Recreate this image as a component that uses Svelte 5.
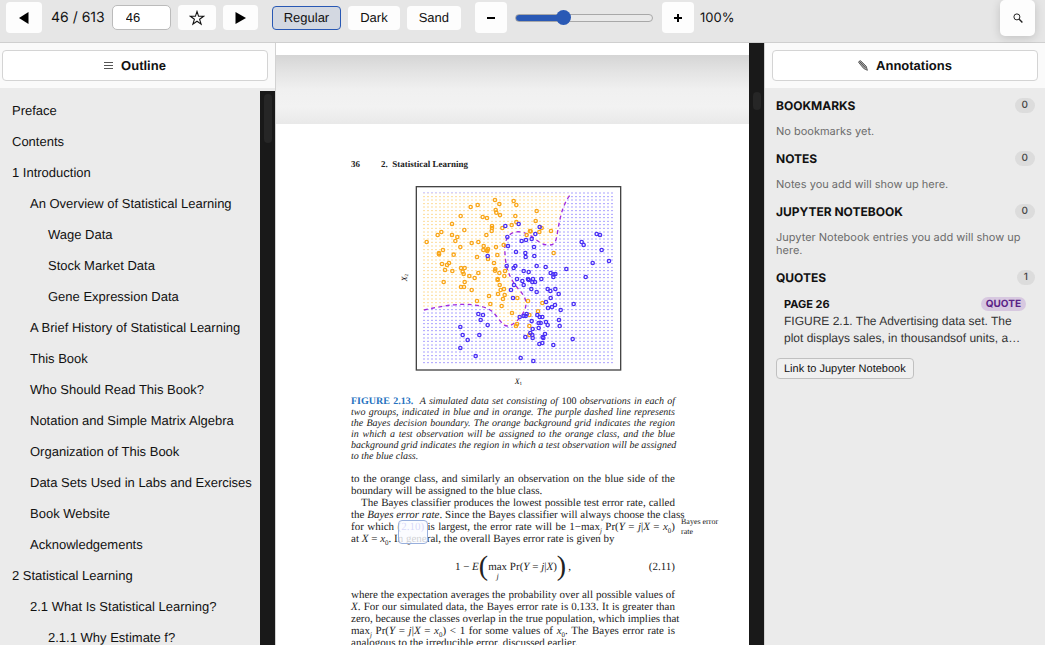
<script>
  let page = $state(46);
  let zoom = $state(100);
  let theme = $state('Regular');
  const total = 613;
  const themes = ['Regular', 'Dark', 'Sand'];
  const fill = $derived(((zoom - 50) / 150) * 100);

  const outline = [
    [0, 'Preface'],
    [0, 'Contents'],
    [0, '1 Introduction'],
    [1, 'An Overview of Statistical Learning'],
    [2, 'Wage Data'],
    [2, 'Stock Market Data'],
    [2, 'Gene Expression Data'],
    [1, 'A Brief History of Statistical Learning'],
    [1, 'This Book'],
    [1, 'Who Should Read This Book?'],
    [1, 'Notation and Simple Matrix Algebra'],
    [1, 'Organization of This Book'],
    [1, 'Data Sets Used in Labs and Exercises'],
    [1, 'Book Website'],
    [1, 'Acknowledgements'],
    [0, '2 Statistical Learning'],
    [1, '2.1 What Is Statistical Learning?'],
    [2, '2.1.1 Why Estimate f?']
  ];

  const sections = [
    ['Bookmarks', 'No bookmarks yet.'],
    ['Notes', 'Notes you add will show up here.'],
    ['Jupyter Notebook', 'Jupyter Notebook entries you add will show up here.']
  ];

  // Scatter points, in plot units (three per pixel)
  const orange = [
    [285, 60], [298, 72], [341, 63], [349, 75], [233, 75], [212, 81], [287, 90], [289, 98], [300, 105], [182, 108],
    [248, 111], [261, 114], [346, 108], [410, 93], [407, 123], [156, 132], [193, 150], [276, 138], [276, 144], [275, 153],
    [307, 144], [335, 135], [349, 126], [390, 153], [392, 154], [380, 165], [418, 156], [425, 144], [453, 153], [124, 156],
    [113, 165], [156, 165], [172, 171], [166, 183], [259, 165], [80, 186], [215, 189], [235, 186], [251, 198], [288, 201],
    [311, 195], [181, 201], [129, 210], [117, 219], [117, 223], [161, 224], [250, 210], [261, 211], [264, 207], [262, 213],
    [292, 225], [231, 231], [264, 237], [282, 249], [461, 219], [126, 252], [141, 255], [147, 249], [135, 270], [157, 273],
    [183, 264], [194, 264], [188, 275], [191, 282], [208, 288], [224, 294], [235, 279], [286, 267], [285, 272], [298, 279],
    [315, 273], [313, 288], [293, 297], [293, 300], [131, 306], [194, 306], [183, 321], [192, 321], [215, 330], [299, 315],
    [302, 330], [312, 327], [294, 342], [314, 345], [309, 357], [267, 348], [231, 363], [271, 372], [305, 378], [336, 399],
    [352, 354], [384, 363], [427, 369], [414, 394], [388, 405], [351, 432], [348, 438], [388, 438], [388, 465]
  ];
  const blue = [
    [316, 138], [356, 132], [419, 141], [406, 162], [322, 171], [324, 198], [365, 183], [378, 180], [395, 177], [402, 201],
    [348, 216], [376, 219], [377, 231], [403, 228], [263, 228], [320, 258], [341, 264], [346, 258], [371, 273], [386, 276],
    [410, 258], [437, 261], [499, 267], [452, 279], [460, 283], [466, 282], [460, 291], [351, 297], [367, 303], [384, 297],
    [386, 300], [399, 297], [397, 306], [405, 306], [424, 297], [371, 315], [342, 315], [333, 330], [394, 327], [410, 336],
    [443, 327], [451, 333], [466, 327], [476, 342], [339, 354], [452, 354], [438, 366], [444, 384], [456, 381], [465, 375],
    [482, 390], [521, 372], [590, 162], [600, 165], [545, 186], [551, 195], [605, 210], [627, 243], [578, 249], [557, 291],
    [235, 402], [249, 405], [242, 420], [263, 435], [181, 441], [188, 465], [238, 465], [203, 480], [181, 504], [227, 528],
    [359, 411], [371, 408], [377, 408], [380, 402], [412, 405], [419, 411], [427, 411], [395, 423], [416, 429], [422, 429],
    [438, 426], [443, 435], [477, 420], [479, 438], [416, 444], [398, 447], [391, 459], [397, 465], [398, 474], [376, 471],
    [435, 462], [428, 471], [430, 474], [418, 492], [427, 489], [460, 495], [518, 477], [362, 534], [400, 543]
  ];
  const rows = Array.from({ length: 49 }, (_, i) => Math.round(39 + i * 10.6));
  const boundary =
    'M72 390C110 382 150 373 190 373S258 380 276 394 305 438 322 438 365 412 374 390 376 350 358 330 320 280 316 235 315 185 326 168 368 152 390 166 420 193 442 195 468 186 472 160 482 105 488 88 502 54 514 40';

  const caption = [
    'two groups, indicated in blue and in orange. The purple dashed line represents',
    'the Bayes decision boundary. The orange background grid indicates the region',
    'in which a test observation will be assigned to the orange class, and the blue',
    'background grid indicates the region in which a test observation will be assigned'
  ];
</script>

<div class="app">
  <header class="toolbar">
    <button class="square prev" aria-label="Previous page" onclick={() => (page = Math.max(1, page - 1))}>
      <svg width="10" height="12" viewBox="0 0 10 12"><path d="M9.500 0v12L0 6z" /></svg>
    </button>
    <span class="count">{page} / {total}</span>
    <input class="number" type="text" aria-label="Page number" bind:value={page} />
    <button class="star" aria-label="Bookmark page">
      <svg width="16" height="16" viewBox="0 0 16 16">
        <path d="M8 1.500l1.600 4.800h5L10.600 9.300l1.500 4.900L8 11.200l-4.100 3 1.500-4.900-4-3h5z" fill="none" stroke="#111" stroke-width="1.100" />
      </svg>
    </button>
    <button class="next" aria-label="Next page" onclick={() => (page = Math.min(total, page + 1))}>
      <svg width="11" height="12" viewBox="0 0 11 12"><path d="M.5 0v12L11 6z" /></svg>
    </button>
    <div class="themes">
      {#each themes as name}
        <button class:active={theme === name} onclick={() => (theme = name)}>{name}</button>
      {/each}
    </div>
    <div class="zoom">
      <button class="square" aria-label="Zoom out">
        <svg width="10" height="10" viewBox="0 0 10 10"><path d="M1 4h8v2H1z" /></svg>
      </button>
      <input type="range" min="50" max="200" aria-label="Zoom" bind:value={zoom} style="--fill: {fill}%" />
      <button class="square" aria-label="Zoom in">
        <svg width="10" height="10" viewBox="0 0 10 10"><path d="M1 4h3V1h2v3h3v2H6v3H4V6H1z" /></svg>
      </button>
      <span class="percent">{zoom}%</span>
    </div>
    <button class="search" aria-label="Search">
      <svg width="10" height="10" viewBox="0 0 10 10">
        <circle cx="3.900" cy="3.900" r="3" fill="none" stroke="#222" />
        <path d="M6.200 6.200l3.200 3.200" stroke="#222" stroke-width="1.400" />
      </svg>
    </button>
  </header>

  <div class="workspace">
    <nav class="side" aria-label="Outline">
      <div class="head">
        <button>
          <svg width="9" height="8" viewBox="0 0 9 8"><path d="M0 .5h9M0 3.500h9M0 6.500h9" stroke="#555" /></svg>
          Outline
        </button>
      </div>
      <div class="scroller">
        <ul>
          {#each outline as [level, title]}
            <li class="level{level}"><a href="#outline">{title}</a></li>
          {/each}
        </ul>
        <div class="bar"><div class="thumb tall"></div></div>
      </div>
    </nav>

    <main>
      <div class="viewer">
        <div class="previous"></div>
        <div class="between"></div>
        <article>
          <div class="running"><b>36</b><b>2.&nbsp; Statistical Learning</b></div>

          <figure>
            <svg viewBox="0 0 972 624" role="img" aria-label="Simulated data with two classes">
              <defs>
                <clipPath id="upper"><path d="{boundary}H60V390z" /></clipPath>
              </defs>
              <g transform="translate(147 0)">
                <rect x="49" y="20" width="613" height="550" fill="#fff" stroke="#444" stroke-width="4" />
                <g stroke-width="3" stroke-dasharray="6 6">
                  {#each rows as y}<path d="M69 {y}H642" stroke="#aaa2ff" />{/each}
                </g>
                <g clip-path="url(#upper)">
                  <path d="M60 30H530V450H60z" fill="#fff" />
                  <g stroke-width="3" stroke-dasharray="6 6">
                    {#each rows as y}<path d="M69 {y}H642" stroke="#fddc98" />{/each}
                  </g>
                </g>
                <path d={boundary} fill="none" stroke="#a02be0" stroke-width="4" stroke-dasharray="12 10" />
                <g fill="none" stroke="#f9a61a" stroke-width="4">
                  {#each orange as [x, y]}<circle cx={x} cy={y} r="5" />{/each}
                </g>
                <g fill="none" stroke="#4a30f5" stroke-width="4">
                  {#each blue as [x, y]}<circle cx={x} cy={y} r="5" />{/each}
                </g>
                <text x="344" y="612" font-size="24" font-style="italic">X<tspan font-size="15" dy="4" font-style="normal">1</tspan></text>
                <text transform="translate(20 304) rotate(-90)" font-size="24" font-style="italic">X<tspan font-size="15" dy="4" font-style="normal">2</tspan></text>
              </g>
            </svg>
            <figcaption>
              <div class="line"><b>FIGURE 2.13.</b> &nbsp;A simulated data set consisting of <span class="up">100</span> observations in each of</div>
              {#each caption as text}<div class="line">{text}</div>{/each}
              <div>to the blue class.</div>
            </figcaption>
          </figure>

          <div class="para">
            <div class="line">to the orange class, and similarly an observation on the blue side of the</div>
            <div>boundary will be assigned to the blue class.</div>
          </div>
          <div class="para">
            <div class="line indent">The Bayes classifier produces the lowest possible test error rate, called</div>
            <div class="line">the <i>Bayes error rate</i>. Since the Bayes classifier will always choose the class</div>
            <div class="line">for which (<a class="ref" href="#eq">2.10)</a> is largest, the error rate will be 1−max<sub><i>j</i></sub> Pr(<i>Y</i> = <i>j</i>|<i>X</i> = <i>x</i><sub>0</sub>)</div>
            <div>at <i>X</i> = <i>x</i><sub>0</sub>. In general, the overall Bayes error rate is given by</div>
          </div>
          <aside>Bayes error<br />rate</aside>

          <div class="equation">
            <div class="formula">
              <span>1 − <i>E</i></span><span class="paren">(</span><span class="max">max<i>j</i></span><span>&nbsp;Pr(<i>Y</i> = <i>j</i>|<i>X</i>)</span><span class="paren">)</span><span>&thinsp;,</span>
            </div>
            <span class="tag">(2.11)</span>
          </div>

          <div class="para">
            <div class="line">where the expectation averages the probability over all possible values of</div>
            <div class="line"><i>X</i>. For our simulated data, the Bayes error rate is 0.133. It is greater than</div>
            <div class="line">zero, because the classes overlap in the true population, which implies that</div>
            <div class="line">max<sub><i>j</i></sub> Pr(<i>Y</i> = <i>j</i>|<i>X</i> = <i>x</i><sub>0</sub>) &lt; 1 for some values of <i>x</i><sub>0</sub>. The Bayes error rate is</div>
            <div>analogous to the irreducible error, discussed earlier.</div>
          </div>
        </article>
      </div>
      <div class="bar main"><div class="thumb"></div></div>
    </main>

    <aside class="side notes" aria-label="Annotations">
      <div class="head">
        <button>
          <svg width="10" height="11" viewBox="0 0 10 11">
            <path d="M.6 2.400Q.8.800 2.600.700L8.200 6.200 9.400 10.300 5.700 8.500z" fill="#aaa" stroke="#555" stroke-width=".9" />
            <path d="M1.500 1.500l6 6.300" stroke="#444" stroke-width=".9" />
          </svg>
          Annotations
        </button>
      </div>
      <div class="sections">
        {#each sections as [title, empty]}
          <section>
            <h2>{title}<span class="badge">0</span></h2>
            <p>{empty}</p>
          </section>
        {/each}
        <section>
          <h2>Quotes<span class="badge">1</span></h2>
          <div class="quote">
            <h3>PAGE 26<span>QUOTE</span></h3>
            <blockquote>FIGURE 2.1. The Advertising data set. The plot displays sales, in thousandsof units, a…</blockquote>
          </div>
          <button class="link">Link to Jupyter Notebook</button>
        </section>
      </div>
    </aside>
  </div>
</div>

<style>
  :global(body) {
    margin: 0;
  }
  .app {
    display: flex;
    flex-direction: column;
    height: 100vh;
    overflow: hidden;
    background: #ebebeb;
    color: #111;
    font-family: "Liberation Sans", Arial, sans-serif;
    font-size: 13px;
    text-rendering: geometricPrecision;
  }
  .app * {
    box-sizing: border-box;
  }
  button {
    display: flex;
    align-items: center;
    justify-content: center;
    padding: 0;
    border: 0;
    border-radius: 4px;
    background: #fdfdfd;
    color: #111;
    font: inherit;
    text-rendering: inherit;
  }
  .toolbar {
    display: flex;
    align-items: center;
    flex: none;
    height: 43px;
    padding: 0 10px 7px 6px;
    border-bottom: 1px solid #cfcfcf;
    background: #e6e6e6;
    font-size: 13px;
  }
  .square {
    width: 32px;
    height: 31px;
  }
  .prev {
    width: 36px;
  }
  .count,
  .percent {
    font: 14px/18px Inter, sans-serif;
  }
  .count {
    margin: 0 7px 0 9px;
    white-space: nowrap;
  }
  .percent {
    margin-left: 6px;
    font-size: 13px;
  }
  .number {
    width: 59px;
    height: 25px;
    padding: 0 0 0 13px;
    border: 1px solid #bbb;
    border-radius: 5px;
    background: #fff;
    color: #111;
    font: inherit;
  }
  .star {
    width: 38px;
    height: 25px;
    margin: 0 7px;
  }
  .next {
    width: 35px;
    height: 25px;
  }
  .themes {
    display: flex;
    gap: 7px;
    margin: 0 14px;
  }
  .themes button {
    height: 24px;
    padding: 0 11px;
    border: 1px solid transparent;
  }
  .themes .active {
    border-color: #2858b4;
    background: #d3d8e1;
  }
  .zoom {
    display: flex;
    align-items: center;
  }
  input[type="range"] {
    appearance: none;
    width: 138px;
    height: 8px;
    margin: 0 9px 0 8px;
    border: 1px solid #a8a8a8;
    border-radius: 4px;
    background: linear-gradient(90deg, #2a59b5 var(--fill), #e9e9e9 var(--fill)) border-box;
  }
  input[type="range"]::-webkit-slider-thumb {
    appearance: none;
    width: 15px;
    height: 15px;
    border-radius: 50%;
    background: #2a59b5;
  }
  .search {
    width: 35px;
    height: 36px;
    margin-left: auto;
    border-radius: 5px;
    box-shadow: 0 2px 10px rgba(0, 0, 0, 0.16);
  }
  .workspace {
    display: grid;
    grid-template-columns: 276px 1fr 281px;
    flex: 1;
    min-height: 0;
  }
  .side {
    display: flex;
    flex-direction: column;
    min-height: 0;
    border-right: 1px solid #d2d2d2;
  }
  .head {
    padding: 7px 7px 7px 2px;
    background: #fafafa;
  }
  .head button {
    gap: 8px;
    width: 100%;
    height: 31px;
    border: 1px solid #d4d4d4;
    background: #fff;
    font-size: 13px;
    font-weight: 700;
  }
  .scroller {
    display: flex;
    flex: 1;
    min-height: 0;
    padding-top: 3px;
  }
  ul {
    flex: 1;
    margin: 0;
    padding: 4px 0 0;
    overflow: hidden;
    list-style: none;
  }
  li {
    line-height: 31px;
    white-space: nowrap;
  }
  li a {
    color: inherit;
    text-decoration: none;
  }
  .level0 {
    padding-left: 12px;
  }
  .level1 {
    padding-left: 30px;
  }
  .level2 {
    padding-left: 48px;
  }
  .bar {
    flex: none;
    width: 15px;
    padding: 3px 3px 0 4px;
    background: #191919;
  }
  .bar.main {
    padding-top: 49px;
  }
  .thumb {
    height: 18px;
    border-radius: 4px;
    background: #262626;
  }
  .thumb.tall {
    height: 49px;
  }
  main {
    display: flex;
    min-width: 0;
    min-height: 0;
  }
  .viewer {
    flex: 1;
    overflow: hidden;
    background: #fff;
  }
  .previous {
    height: 12px;
  }
  .between {
    height: 69px;
    background: linear-gradient(#d5d5d5, #e4e4e4 25%, #f0f0f0 50%, #f2f2f2 75%, #e9e9e9);
  }
  article {
    display: grid;
    grid-template-columns: 75fr 324px 74fr;
    padding-top: 34px;
    color: #222;
    font: 11px/12px "Liberation Serif", serif;
    white-space: nowrap;
  }
  article > * {
    grid-column: 2;
  }
  .running {
    display: flex;
    gap: 21px;
    font-size: 9px;
  }
  figure {
    margin: 10px 0 11px;
  }
  figure svg {
    display: block;
    width: 100%;
  }
  figcaption {
    margin-top: 8px;
    font: italic 10px/11px "Liberation Serif", serif;
  }
  figcaption b {
    color: #2672c0;
    font-style: normal;
  }
  .up {
    font-style: normal;
  }
  .line {
    text-align: justify;
    text-align-last: justify;
  }
  .indent {
    padding-left: 10px;
  }
  sub {
    font-size: 7px;
    line-height: 0;
  }
  .ref {
    position: relative;
    color: #4c4ce0;
    text-decoration: none;
  }
  .ref::after {
    position: absolute;
    top: -1px;
    left: -3px;
    width: 28px;
    height: 22px;
    border: 1px solid #98afdc;
    border-radius: 4px;
    background: rgba(250, 251, 255, 0.8);
    content: "";
  }
  article > aside {
    grid-column: 3;
    align-self: end;
    height: 28px;
    margin-left: 6px;
    font-size: 8px;
    line-height: 10px;
  }
  .equation {
    display: grid;
    grid-template-columns: 1fr auto 1fr;
    align-items: center;
    height: 44px;
  }
  .formula {
    display: flex;
    align-items: center;
    grid-column: 2;
  }
  .paren {
    font-size: 28px;
    line-height: 30px;
  }
  .max {
    display: flex;
    flex-direction: column;
    align-items: center;
    padding-top: 8px;
  }
  .max i {
    font-size: 8px;
    line-height: 8px;
  }
  .tag {
    justify-self: end;
  }
  .notes {
    border-right: 0;
    border-left: 1px solid #d2d2d2;
  }
  .notes .head {
    padding-left: 7px;
  }
  .sections {
    padding: 9px 10px 0 11px;
    font-family: Inter, sans-serif;
  }
  h2,
  h3 {
    display: flex;
    align-items: center;
    justify-content: space-between;
    margin: 0;
    font-size: 12px;
    font-weight: 700;
  }
  h2 {
    height: 16px;
    text-transform: uppercase;
  }
  .badge {
    padding: 0 7px;
    border-radius: 8px;
    background: #dcdcdc;
    color: #444;
    font-size: 10px;
    font-weight: 500;
    line-height: 15px;
  }
  p {
    margin: 12px 0;
    color: #6b6b6b;
    font-size: 11px;
    line-height: 13px;
  }
  .quote {
    padding: 12px 9px 0 8px;
  }
  h3 {
    font-size: 11px;
    line-height: 14px;
  }
  h3 span {
    padding: 0 5px;
    border-radius: 7px;
    background: #d7c8e0;
    color: #5a2386;
    font-size: 10px;
  }
  blockquote {
    display: -webkit-box;
    margin: 2px 0 0;
    overflow: hidden;
    color: #333;
    font: 12px/17px "Liberation Sans", Arial, sans-serif;
    -webkit-box-orient: vertical;
    -webkit-line-clamp: 2;
  }
  .link {
    height: 21px;
    margin-top: 11px;
    padding: 0 7px;
    border: 1px solid #c0c0c0;
    background: #f0f0f0;
    font: 11px "Liberation Sans", Arial, sans-serif;
  }
</style>
